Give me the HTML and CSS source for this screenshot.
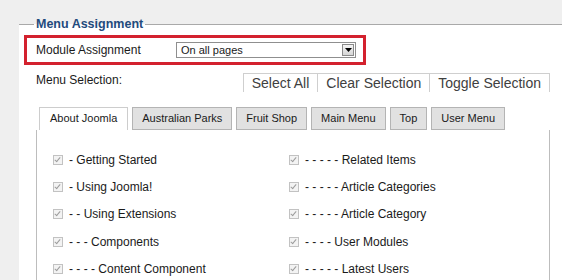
FILE: index.html
```html
<!DOCTYPE html>
<html lang="en">
<head>
    <meta charset="UTF-8">
    <meta name="viewport" content="width=device-width, initial-scale=1.0">
    <title>Menu Assignment</title>
    <link rel="stylesheet" href="styles.css">
</head>
<body>
    <fieldset class="assign">
        <legend>Menu Assignment</legend>

        <div class="module-row">
            <label class="module-label">Module Assignment</label>
            <div class="fake-select">
                <span>On all pages</span>
                <span class="fake-select-btn">
                    <svg width="7" height="4" viewBox="0 0 7 4"><path d="M0 0h7L3.5 4z" fill="#000"/></svg>
                </span>
            </div>
        </div>

        <div class="selection-row">
            <label class="selection-label">Menu Selection:</label>
            <div class="btn-group">
                <button class="sel-btn">Select All</button>
                <button class="sel-btn">Clear Selection</button>
                <button class="sel-btn">Toggle Selection</button>
            </div>
        </div>

        <ul class="tabs">
            <li class="tab active">About Joomla</li>
            <li class="tab">Australian Parks</li>
            <li class="tab">Fruit Shop</li>
            <li class="tab">Main Menu</li>
            <li class="tab">Top</li>
            <li class="tab">User Menu</li>
        </ul>

        <div class="tab-panel">
            <ul class="menu-items">
                <li><span class="check"></span>- Getting Started</li>
                <li><span class="check"></span>- Using Joomla!</li>
                <li><span class="check"></span>- - Using Extensions</li>
                <li><span class="check"></span>- - - Components</li>
                <li><span class="check"></span>- - - - Content Component</li>
                <li><span class="check"></span>- - - - - Related Items</li>
                <li><span class="check"></span>- - - - - Article Categories</li>
                <li><span class="check"></span>- - - - - Article Category</li>
                <li><span class="check"></span>- - - - User Modules</li>
                <li><span class="check"></span>- - - - - Latest Users</li>
            </ul>
        </div>
    </fieldset>
</body>
</html>
```

FILE: styles.css
```css
body {
    font-family: "Liberation Sans", Arial, Helvetica, sans-serif;
    margin: 0;
    background-color: #efefef;
    color: #1a1a1a;
    overflow: hidden;
}
.assign {
    margin: 17px 0 0 19px;
    padding: 0 0 40px 0;
    border: none;
    border-top: 1px solid #a9a9a9;
    background-color: #fff;
    min-width: 0;
}
.assign legend {
    margin-left: 15px;
    padding: 0 2px;
    font-size: 12.5px;
    line-height: 14px;
    font-weight: bold;
    color: #1f4b7d;
}
.module-row {
    display: flex;
    align-items: center;
    box-sizing: border-box;
    width: 342px;
    height: 30px;
    margin: 4px 0 0 5px;
    padding-left: 9px;
    border: 3px solid #d3212e;
}
.module-label {
    width: 140px;
    font-size: 12px;
}
.fake-select {
    display: flex;
    align-items: center;
    justify-content: space-between;
    box-sizing: border-box;
    width: 180px;
    height: 16px;
    padding: 0 1px 0 4px;
    border: 1px solid #8f8f8f;
    font-size: 11px;
}
.fake-select-btn {
    display: flex;
    align-items: center;
    justify-content: center;
    box-sizing: border-box;
    width: 12px;
    height: 12px;
    border: 1px solid #8a8a8a;
    background: linear-gradient(#f4f4f4, #d6d6d6);
}
.selection-row {
    display: flex;
    align-items: flex-start;
    margin: 8px 12px 0 17px;
}
.selection-label {
    font-size: 12px;
    line-height: 14px;
}
.btn-group {
    display: flex;
    margin-left: auto;
    border-top: 1px solid #cfcfcf;
    border-right: 1px solid #cfcfcf;
}
.sel-btn {
    height: 18px;
    margin: 0;
    padding: 0 8px;
    border: none;
    border-left: 1px solid #cfcfcf;
    background: #fff;
    font-family: inherit;
    font-size: 14px;
    line-height: 18px;
    color: #404040;
}
.tabs {
    display: flex;
    gap: 4px;
    margin: 15px 0 0 20px;
    padding: 0;
    list-style: none;
}
.tab {
    box-sizing: border-box;
    height: 23px;
    padding: 0 9px;
    border: 1px solid #b4b4b4;
    background-color: #e1e1e1;
    font-size: 11px;
    line-height: 21px;
    color: #1a1a1a;
}
.tab.active {
    border-color: #cdcdcd;
    border-bottom: none;
    background-color: #fff;
    padding: 0 10px;
}
.tab-panel {
    margin: 0 12px 0 17px;
    border-left: 1px solid #bdbdbd;
    border-right: 1px solid #bdbdbd;
    padding: 16px 0 0 16px;
}
.menu-items {
    display: grid;
    grid-template-columns: 236px 236px;
    grid-template-rows: repeat(5, 27.3px);
    grid-auto-flow: column;
    margin: 0;
    padding: 0;
    list-style: none;
    font-size: 12px;
}
.menu-items li {
    display: flex;
    align-items: center;
    gap: 6px;
}
.check {
    display: inline-block;
    box-sizing: border-box;
    width: 10px;
    height: 10px;
    border: 1px solid #c2c2c2;
    background-color: #f3f3f3;
    position: relative;
}
.check::after {
    content: "";
    position: absolute;
    left: 2px;
    top: 0;
    width: 2px;
    height: 5px;
    border-right: 1px solid #9c9c9c;
    border-bottom: 1px solid #9c9c9c;
    transform: rotate(40deg);
}
```
